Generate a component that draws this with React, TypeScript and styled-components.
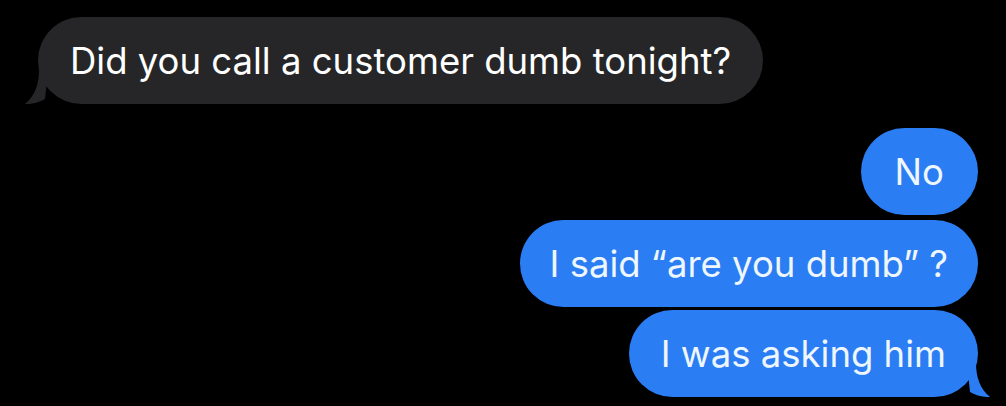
import React from "react";
import styled, { createGlobalStyle } from "styled-components";

const Global = createGlobalStyle`
  html, body { margin: 0; padding: 0; background: #000; }
  body { width: 1006px; height: 406px; overflow: hidden; font-family: Inter, "Open Sans", "Liberation Sans", sans-serif; }
`;

const Thread = styled.div`
  display: flex;
  flex-direction: column;
  padding: 17px 28px 0 38px;
`;

const Bubble = styled.div<{ $me?: boolean; $gap?: number; $px?: number; $ls?: number }>`
  position: relative;
  align-self: ${(p) => (p.$me ? "flex-end" : "flex-start")};
  margin-top: ${(p) => p.$gap ?? 0}px;
  height: 87px;
  box-sizing: border-box;
  padding: 0 ${(p) => p.$px ?? 31}px;
  display: flex;
  align-items: center;
  border-radius: 44px;
  background: ${(p) => (p.$me ? "#2a7df2" : "#262628")};
  color: ${(p) => (p.$me ? "#eef6ff" : "#fff")};
  font-size: 36.5px;
  letter-spacing: ${(p) => p.$ls ?? 0}px;
  white-space: nowrap;
`;

const Tail = styled.svg<{ $me?: boolean }>`
  position: absolute;
  bottom: 0;
  width: 22px;
  height: 34px;
  ${(p) => (p.$me ? "right: -12px;" : "left: -13px;")}
`;

const LeftTail = () => (
  <Tail viewBox="0 0 22 34" aria-hidden>
    <path d="M14 0 C14 14 10 26 0 34 C8 34 15 32 20 29 L22 10 Z" fill="#262628" />
  </Tail>
);

const RightTail = () => (
  <Tail $me viewBox="0 0 22 34" aria-hidden>
    <path d="M8 0 C8 14 12 26 22 34 C14 34 7 32 2 29 L0 10 Z" fill="#2a7df2" />
  </Tail>
);

export default function App() {
  return (
    <>
      <Global />
      <Thread>
        <Bubble $px={32}>
          <LeftTail />
          Did you call a customer dumb tonight?
        </Bubble>
        <Bubble $me $gap={24} $px={34}>
          No
        </Bubble>
        <Bubble $me $gap={5} $px={30}>
          I said “are you dumb” ?
        </Bubble>
        <Bubble $me $gap={3} $px={32}>
          <RightTail />
          I was asking him
        </Bubble>
      </Thread>
    </>
  );
}
